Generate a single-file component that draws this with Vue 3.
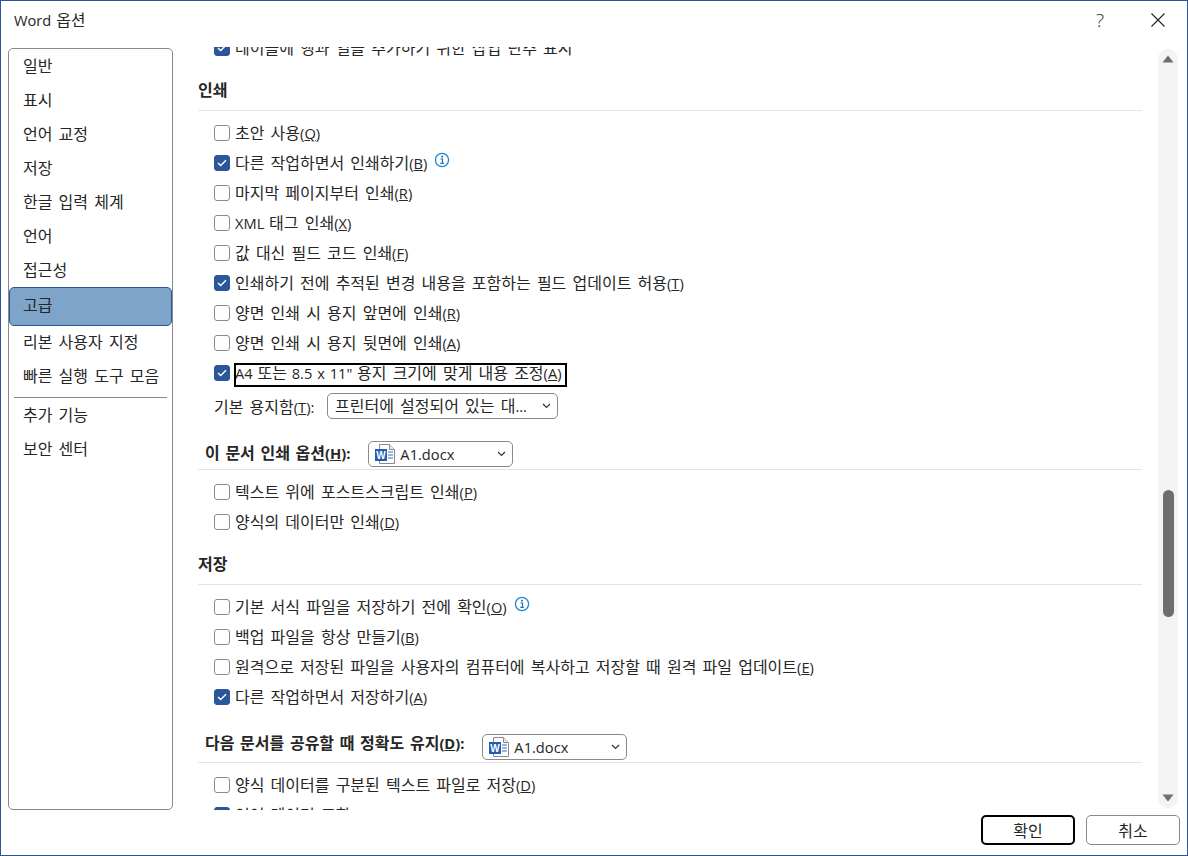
<script setup>
const navTop = ['일반', '표시', '언어 교정', '저장', '한글 입력 체계', '언어', '접근성']
const navBottom = ['추가 기능', '보안 센터']
const printRows = [
  { t: '초안 사용', k: 'Q' },
  { t: '다른 작업하면서 인쇄하기', k: 'B', c: true, info: true },
  { t: '마지막 페이지부터 인쇄', k: 'R' },
  { t: 'XML 태그 인쇄', k: 'X' },
  { t: '값 대신 필드 코드 인쇄', k: 'F' },
  { t: '인쇄하기 전에 추적된 변경 내용을 포함하는 필드 업데이트 허용', k: 'T', c: true },
  { t: '양면 인쇄 시 용지 앞면에 인쇄', k: 'R' },
  { t: '양면 인쇄 시 용지 뒷면에 인쇄', k: 'A' },
  { t: 'A4 또는 8.5 x 11" 용지 크기에 맞게 내용 조정', k: 'A', c: true, focus: true },
]
const docRows = [
  { t: '텍스트 위에 포스트스크립트 인쇄', k: 'P' },
  { t: '양식의 데이터만 인쇄', k: 'D' },
]
const saveRows = [
  { t: '기본 서식 파일을 저장하기 전에 확인', k: 'O', info: true },
  { t: '백업 파일을 항상 만들기', k: 'B' },
  { t: '원격으로 저장된 파일을 사용자의 컴퓨터에 복사하고 저장할 때 원격 파일 업데이트', k: 'E' },
  { t: '다른 작업하면서 저장하기', k: 'A', c: true },
]
const shareRows = [
  { t: '양식 데이터를 구분된 텍스트 파일로 저장', k: 'D' },
  { t: '언어 데이터 포함', k: 'L', c: true },
]
function segs(t) {
  return t
    .split(/([\x20-\x7e]*[A-Za-z0-9][\x20-\x7e]*)/)
    .filter(Boolean)
    .map((s) => ({ t: s, lat: /[A-Za-z0-9]/.test(s) }))
}
</script>

<template>
  <div class="dialog">
    <header class="titlebar">
      <span class="title"><span class="lat">Word </span>옵션</span>
      <span class="help">?</span>
      <svg class="close" width="16" height="16" viewBox="0 0 16 16"><path d="M1.5 1.5 14.5 14.5M14.5 1.5 1.5 14.5" stroke="#222" stroke-width="1.1" fill="none"/></svg>
    </header>

    <div class="main">
      <nav class="side">
        <div v-for="n in navTop" :key="n" class="nav">{{ n }}</div>
        <div class="nav selected">고급</div>
        <div class="nav">리본 사용자 지정</div>
        <div class="nav">빠른 실행 도구 모음</div>
        <div class="navsep"></div>
        <div v-for="n in navBottom" :key="n" class="nav">{{ n }}</div>
      </nav>

      <div class="viewport">
        <div class="inner">
          <div class="row">
            <span class="box on"><svg width="10" height="8" viewBox="0 0 10 8"><path d="M1 4 3.7 6.6 9 1.2" stroke="#fff" stroke-width="1.4" fill="none"/></svg></span>
            <span class="label">테이블에 행과 열을 추가하기 위한 삽입 단추 표시</span>
          </div>

          <div class="heading">인쇄</div>
          <div class="rowgroup">
            <div v-for="r in printRows" :key="r.t" class="row">
              <span class="box" :class="{ on: r.c }"><svg v-if="r.c" width="10" height="8" viewBox="0 0 10 8"><path d="M1 4 3.7 6.6 9 1.2" stroke="#fff" stroke-width="1.4" fill="none"/></svg></span>
              <span class="label" :class="{ focus: r.focus }"><span v-for="(s, i) in segs(r.t)" :key="i" :class="{ lat: s.lat }">{{ s.t }}</span><span class="lat">(<u>{{ r.k }}</u>)</span></span>
              <svg v-if="r.info" class="info" width="16" height="16" viewBox="0 0 16 16"><circle cx="8" cy="8" r="6.6" fill="none" stroke="#1e88d8" stroke-width="1.3"/><rect x="7.2" y="3.8" width="1.7" height="1.7" fill="#1e6fb0"/><path d="M6.5 7h2v4.2h1.2M6.3 11.3h3.5" fill="none" stroke="#1e6fb0" stroke-width="1.2"/></svg>
            </div>
          </div>
          <div class="paper">
            <span class="paperlabel">기본 용지함<span class="lat">(<u>T</u>):</span></span>
            <div class="select wide">
              <span class="seltext">프린터에 설정되어 있는 대<span class="lat">...</span></span>
              <svg class="chev" width="9" height="6" viewBox="0 0 9 6"><path d="M1 1 4.5 4.5 8 1" stroke="#333" stroke-width="1.2" fill="none"/></svg>
            </div>
          </div>

          <div class="heading sub first">
            <span class="subtext">이 문서 인쇄 옵션<span class="lat">(<u>H</u>):</span></span>
            <div class="select file">
              <svg class="word" width="22" height="20" viewBox="0 0 22 20">
                <path d="M5.5.5h10l5 5v14h-15z" fill="#fff" stroke="#8a8a8a"/>
                <path d="M15.5.5v5h5" fill="#e8e8e8" stroke="#8a8a8a"/>
                <path d="M14 8h5M14 11h5M14 14h5" stroke="#2b6cc4" stroke-width="1.2"/>
                <rect x="1" y="5" width="12" height="12" fill="#1f5db5"/>
                <text x="7" y="14.6" text-anchor="middle" class="w">W</text>
              </svg>
              <span class="seltext lat">A1.docx</span>
              <svg class="chev" width="9" height="6" viewBox="0 0 9 6"><path d="M1 1 4.5 4.5 8 1" stroke="#333" stroke-width="1.2" fill="none"/></svg>
            </div>
          </div>
          <div class="rowgroup">
            <div v-for="r in docRows" :key="r.t" class="row">
              <span class="box"></span>
              <span class="label">{{ r.t }}<span class="lat">(<u>{{ r.k }}</u>)</span></span>
            </div>
          </div>

          <div class="heading">저장</div>
          <div class="rowgroup">
            <div v-for="r in saveRows" :key="r.t" class="row">
              <span class="box" :class="{ on: r.c }"><svg v-if="r.c" width="10" height="8" viewBox="0 0 10 8"><path d="M1 4 3.7 6.6 9 1.2" stroke="#fff" stroke-width="1.4" fill="none"/></svg></span>
              <span class="label">{{ r.t }}<span class="lat">(<u>{{ r.k }}</u>)</span></span>
              <svg v-if="r.info" class="info" width="16" height="16" viewBox="0 0 16 16"><circle cx="8" cy="8" r="6.6" fill="none" stroke="#1e88d8" stroke-width="1.3"/><rect x="7.2" y="3.8" width="1.7" height="1.7" fill="#1e6fb0"/><path d="M6.5 7h2v4.2h1.2M6.3 11.3h3.5" fill="none" stroke="#1e6fb0" stroke-width="1.2"/></svg>
            </div>
          </div>

          <div class="heading sub second">
            <span class="subtext">다음 문서를 공유할 때 정확도 유지<span class="lat">(<u>D</u>):</span></span>
            <div class="select file">
              <svg class="word" width="22" height="20" viewBox="0 0 22 20">
                <path d="M5.5.5h10l5 5v14h-15z" fill="#fff" stroke="#8a8a8a"/>
                <path d="M15.5.5v5h5" fill="#e8e8e8" stroke="#8a8a8a"/>
                <path d="M14 8h5M14 11h5M14 14h5" stroke="#2b6cc4" stroke-width="1.2"/>
                <rect x="1" y="5" width="12" height="12" fill="#1f5db5"/>
                <text x="7" y="14.6" text-anchor="middle" class="w">W</text>
              </svg>
              <span class="seltext lat">A1.docx</span>
              <svg class="chev" width="9" height="6" viewBox="0 0 9 6"><path d="M1 1 4.5 4.5 8 1" stroke="#333" stroke-width="1.2" fill="none"/></svg>
            </div>
          </div>
          <div class="rowgroup">
            <div v-for="r in shareRows" :key="r.t" class="row">
              <span class="box" :class="{ on: r.c }"><svg v-if="r.c" width="10" height="8" viewBox="0 0 10 8"><path d="M1 4 3.7 6.6 9 1.2" stroke="#fff" stroke-width="1.4" fill="none"/></svg></span>
              <span class="label">{{ r.t }}<span class="lat">(<u>{{ r.k }}</u>)</span></span>
            </div>
          </div>
        </div>
      </div>

      <div class="track">
        <svg width="12" height="8" viewBox="0 0 12 8"><path d="M6 .5 11.5 7.5H.5z" fill="#6e6e6e"/></svg>
        <div class="thumb"></div>
        <svg class="down" width="12" height="8" viewBox="0 0 12 8"><path d="M.5 .5H11.5L6 7.5z" fill="#6e6e6e"/></svg>
      </div>
    </div>

    <footer class="footer">
      <button class="btn primary">확인</button>
      <button class="btn">취소</button>
    </footer>
  </div>
</template>

<style>
html, body { margin: 0; background: #fff; }
</style>

<style scoped>
.dialog {
  width: 1188px;
  height: 856px;
  box-sizing: border-box;
  border: 1px solid #2b579a;
  background: #fff;
  overflow: hidden;
  font-family: "Open Sans", "Noto Sans CJK KR", sans-serif;
  font-size: 16px;
  word-spacing: 2px;
  color: #262626;
}
.lat { font-size: 14.67px; word-spacing: 1px; }
.titlebar {
  height: 47px;
  display: flex;
  align-items: flex-start;
  padding: 8px 21px 0 13px;
  box-sizing: border-box;
}
.title { line-height: 22px; flex: 1; }
.help { font-size: 19px; font-weight: 300; line-height: 22px; margin-right: 46px; }
.close { margin-top: 3px; }

.main { display: flex; height: 762px; padding-left: 7px; }
.side {
  width: 165px;
  height: 762px;
  box-sizing: border-box;
  border: 1px solid #8a8a8a;
  border-radius: 5px;
  flex: none;
}
.nav { height: 34px; line-height: 34px; padding-left: 14px; }
.nav.selected {
  height: 39px;
  line-height: 35px;
  box-sizing: border-box;
  margin: 0 0 -1px;
  background: #7ea4c9;
  border: 1px solid #2b579a;
  border-radius: 5px;
  padding-left: 13px;
}
.navsep { height: 1px; background: #8a8a8a; margin: 4px 5px 0; }

.viewport { width: 944px; height: 763px; margin: -1px 0 0 25px; overflow: hidden; flex: none; }
.inner { margin-top: -14px; }
.row { height: 30px; display: flex; align-items: center; padding-left: 16px; }
.box {
  width: 16px;
  height: 16px;
  box-sizing: border-box;
  border: 1px solid #8a8a8a;
  border-radius: 3px;
  flex: none;
  display: flex;
  align-items: center;
  justify-content: center;
  background: #fff;
}
.box.on { background: #2b579a; border-color: #2b579a; }
.label { margin-left: 5px; white-space: nowrap; line-height: 24px; }
.label.focus {
  outline: 2px solid #000;
  outline-offset: -1px;
  padding-right: 4px;
  height: 22px;
  line-height: 18px;
  margin-top: 4px;
}
.info { margin: -7px 0 0 7px; }
.heading {
  height: 48px;
  box-sizing: border-box;
  border-bottom: 1px solid #e3e3e3;
  font-weight: 700;
  padding-top: 16px;
  line-height: 22px;
  word-spacing: 1.5px;
}
.rowgroup { margin-top: 7px; }
.heading.sub { display: flex; align-items: flex-end; padding: 0 0 2px 7px; }
.heading.first { height: 46px; }
.heading.second { height: 51px; }
.subtext { white-space: nowrap; align-self: center; margin-top: 14px; }
.paper { height: 36px; display: flex; align-items: center; padding-left: 16px; }
.paperlabel { width: 113px; flex: none; white-space: nowrap; }
.select {
  height: 26px;
  box-sizing: border-box;
  border: 1px solid #8a8a8a;
  border-radius: 5px;
  display: flex;
  align-items: center;
  background: #fff;
  font-weight: 400;
  white-space: nowrap;
}
.select.wide { width: 231px; padding-left: 7px; }
.select.file { width: 145px; padding-left: 5px; margin-left: 18px; }
.seltext { flex: 1; line-height: 20px; }
.word { margin-right: 4px; flex: none; }
.w { font: 700 10px "Liberation Sans", sans-serif; fill: #fff; }
.chev { margin-right: 6px; flex: none; }

.track {
  width: 20px;
  height: 759px;
  margin: 1px 0 0 16px;
  flex: none;
  background: #f3f3f3;
  border-radius: 10px;
  box-sizing: border-box;
  padding-top: 6px;
  display: flex;
  flex-direction: column;
  align-items: center;
}
.thumb { width: 11px; height: 127px; border-radius: 5.5px; background: #6e6e6e; margin-top: 427px; }
.down { margin-top: 177px; }

.footer { display: flex; justify-content: flex-end; gap: 11px; padding-right: 7px; margin-top: 5px; }
.btn {
  width: 94px;
  height: 30px;
  box-sizing: border-box;
  border: 1px solid #8a8a8a;
  border-radius: 5px;
  background: #fff;
  font: inherit;
  word-spacing: inherit;
  color: #262626;
  padding: 0;
}
.btn.primary { border: 2.5px solid #000; }
</style>
